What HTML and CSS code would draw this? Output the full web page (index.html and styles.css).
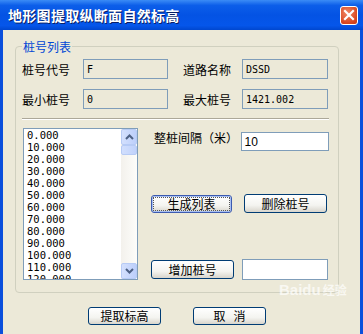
FILE: index.html
```html
<!DOCTYPE html>
<html lang="zh-CN">

<head>
    <meta charset="UTF-8">
    <title>地形图提取纵断面自然标高</title>
    <link rel="stylesheet" href="styles.css">
</head>

<body>
    <div class="window">
        <div class="titlebar">
            <span class="title">地形图提取纵断面自然标高</span>
            <span class="closeBtn">
                <svg width="12" height="12" viewBox="0 0 12 12">
                    <path d="M2 2 L10 10 M10 2 L2 10" stroke="white" stroke-width="2.2" stroke-linecap="square" />
                </svg>
            </span>
        </div>
        <div class="client">
            <fieldset class="group">
                <legend>桩号列表</legend>
                <div class="fields">
                    <label>桩号代号</label>
                    <div class="edit ro">F</div>
                    <label class="second">道路名称</label>
                    <div class="edit ro">DSSD</div>
                    <label>最小桩号</label>
                    <div class="edit ro">0</div>
                    <label class="second">最大桩号</label>
                    <div class="edit ro">1421.002</div>
                </div>
                <div class="sep"></div>
                <div class="lower">
                    <div class="listbox">
                        <ul class="items">
                            <li>0.000</li>
                            <li>10.000</li>
                            <li>20.000</li>
                            <li>30.000</li>
                            <li>40.000</li>
                            <li>50.000</li>
                            <li>60.000</li>
                            <li>70.000</li>
                            <li>80.000</li>
                            <li>90.000</li>
                            <li>100.000</li>
                            <li>110.000</li>
                            <li>120.000</li>
                        </ul>
                        <div class="scrollbar">
                            <div class="sbBtn">
                                <svg width="9" height="6" viewBox="0 0 9 6"><path d="M1 5 L4.5 1.5 L8 5" fill="none" stroke="#4d6185" stroke-width="2" /></svg>
                            </div>
                            <div class="sbThumb"></div>
                            <div class="sbTrack"></div>
                            <div class="sbBtn">
                                <svg width="9" height="6" viewBox="0 0 9 6"><path d="M1 1 L4.5 4.5 L8 1" fill="none" stroke="#4d6185" stroke-width="2" /></svg>
                            </div>
                        </div>
                    </div>
                    <div class="controls">
                        <div class="row spacing">
                            <label>整桩间隔（米）</label>
                            <div class="edit num">10</div>
                        </div>
                        <div class="row actions">
                            <button class="btn focus"><span>生成列表</span></button>
                            <button class="btn wide">删除桩号</button>
                        </div>
                        <div class="row add">
                            <button class="btn wide">增加桩号</button>
                            <div class="edit num"></div>
                        </div>
                    </div>
                </div>
            </fieldset>
            <div class="footer">
                <button class="btn">提取标高</button>
                <button class="btn">取&nbsp;&nbsp;&nbsp;消</button>
            </div>
            <div class="watermark">Baidu<span>经验</span></div>
        </div>
    </div>
</body>

</html>
```

FILE: styles.css
```css
* {
    margin: 0;
    padding: 0;
    box-sizing: border-box;
}

body {
    width: 363px;
    height: 334px;
    overflow: hidden;
    font-family: "Noto Sans CJK SC", "Liberation Sans", sans-serif;
    font-size: 12px;
    color: black;
}

.window {
    height: 334px;
    background: #0a4fdc;
}

.titlebar {
    height: 30px;
    display: flex;
    align-items: center;
    justify-content: space-between;
    padding: 0 5px 0 8px;
    background: linear-gradient(#3b8cf6 0%, #0c5ee9 18%, #0453e4 50%, #0556ea 85%, #0047cf 100%);
}

.title {
    color: white;
    font-size: 14px;
    font-weight: bold;
    letter-spacing: 0.3px;
    text-shadow: 1px 1px 0 #0a1f66;
}

.closeBtn {
    width: 18px;
    height: 19px;
    border: 1px solid white;
    border-radius: 3px;
    background: radial-gradient(circle at 40% 35%, #f08a68, #d9461f 70%, #c13a18);
    display: flex;
    align-items: center;
    justify-content: center;
}

.client {
    position: relative;
    height: 304px;
    margin: 0 3px;
    background: #ece9d8;
    padding: 8px 21px 0 12px;
}

.group {
    border: 1px solid #d0d0bf;
    border-radius: 4px;
    padding: 2px 9px 12px 6px;
    height: 255px;
}

.group legend {
    color: #0046d5;
    padding: 0 1px;
    margin-left: 0;
    line-height: 17px;
}

.fields {
    display: grid;
    grid-template-columns: 61px 85px 74px 86px;
    grid-template-rows: 20px 20px;
    row-gap: 10px;
    align-items: center;
    margin-top: 2px;
}

.fields .second {
    padding-left: 15px;
}

.fields .edit {
    height: 20px;
}

.edit {
    border: 1px solid #7f9db9;
    background: white;
    font-family: "DejaVu Sans Mono", "Liberation Mono", monospace;
    font-size: 10px;
    padding: 3px 3px 0;
    line-height: 13px;
}

.edit.ro {
    background: #ece9d8;
}

.sep {
    margin-top: 9px;
    border-top: 1px solid #aca899;
    border-bottom: 1px solid white;
}

.lower {
    display: flex;
    margin-top: 8px;
}

.listbox {
    display: flex;
    width: 115px;
    height: 152px;
    margin-left: 1px;
    border: 1px solid #7f9db9;
    background: white;
    overflow: hidden;
}

.items {
    list-style: none;
    flex: 1;
    padding: 0 0 0 3px;
    font-family: "DejaVu Sans Mono", "Liberation Mono", monospace;
    font-size: 10.5px;
    line-height: 12px;
}

.scrollbar {
    width: 16px;
    display: flex;
    flex-direction: column;
    background: linear-gradient(90deg, #f3f1ec, #fdfdfa);
}

.sbBtn {
    height: 16px;
    border: 1px solid #b7cbf5;
    border-radius: 2px;
    background: linear-gradient(90deg, #d4e0fd, #bccffb);
    display: flex;
    align-items: center;
    justify-content: center;
}

.sbThumb {
    height: 10px;
    border: 1px solid #b7cbf5;
    border-radius: 2px;
    background: linear-gradient(90deg, #d2dffd, #c0d2fb);
}

.sbTrack {
    flex: 1;
}

.controls {
    flex: 1;
    padding-left: 13px;
}

.row {
    display: flex;
    align-items: center;
}

.spacing {
    padding-left: 3px;
    gap: 3px;
}

.spacing label {
    margin-top: -4px;
}

.spacing .edit {
    width: 89px;
    height: 19px;
    margin-top: 4px;
    font-family: "Liberation Sans", sans-serif;
    font-size: 12px;
}

.actions {
    margin-top: 43px;
    gap: 12px;
}

.add {
    margin-top: 46px;
    gap: 8px;
}

.add .edit {
    width: 86px;
    height: 21px;
}

.btn {
    width: 73px;
    height: 18px;
    border: 1px solid #003c74;
    border-radius: 3px;
    background: linear-gradient(#ffffff 0%, #f4f4f0 60%, #d8d5cc 100%);
    font-family: "Noto Sans CJK SC", sans-serif;
    font-size: 12px;
    line-height: 14px;
    color: black;
}

.btn.wide {
    width: 83px;
    height: 19px;
}

.btn.focus {
    width: 81px;
    border-color: #3c5bb0;
    box-shadow: inset 0 0 0 1px #a8bff1;
    padding: 1px;
}

.btn.focus span {
    display: block;
    border: 1px dotted #555;
    height: 14px;
    line-height: 12px;
}

.footer {
    display: flex;
    justify-content: center;
    gap: 32px;
    margin-top: 14px;
}

.watermark {
    position: absolute;
    left: 276px;
    top: 251px;
    white-space: nowrap;
    color: rgba(255, 255, 255, 0.7);
    font-family: "Liberation Sans", sans-serif;
    font-size: 15px;
    font-weight: bold;
    pointer-events: none;
}

.watermark span {
    margin-left: 2px;
    font-family: "Noto Sans CJK SC", sans-serif;
    font-size: 12px;
}
```
